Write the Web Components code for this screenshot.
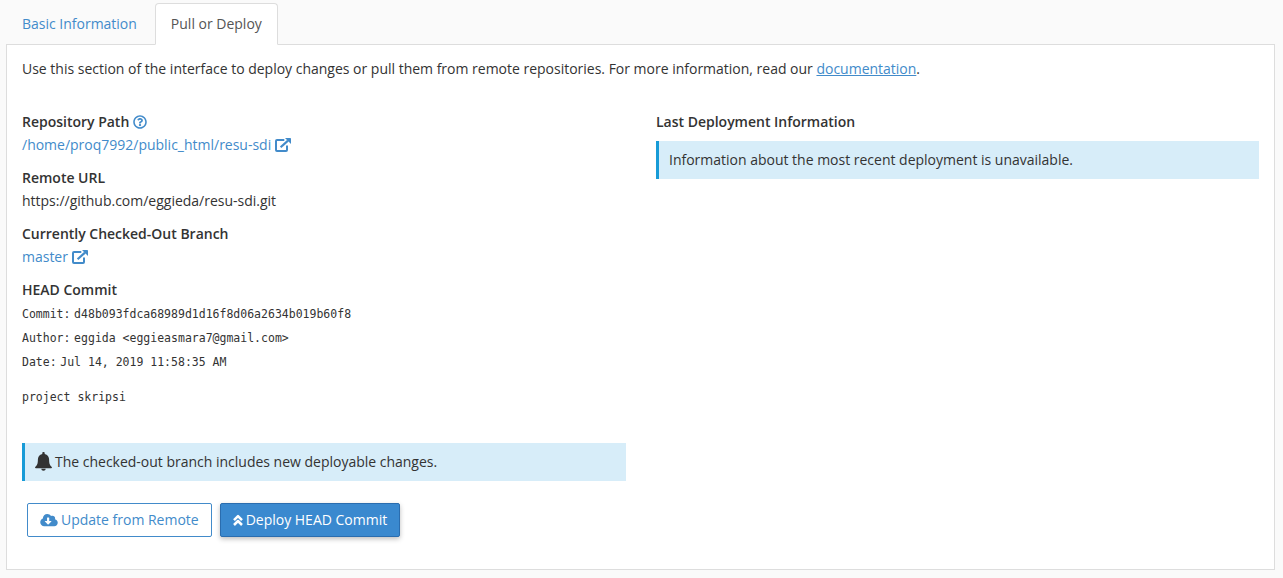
<!DOCTYPE html>
<html lang="en">
<head>
<meta charset="utf-8">
<title>Pull or Deploy</title>
<style>
html{background:#fafafa}
body{margin:0;padding:3px 8px 0 6px;font:14px/20px "Open Sans",sans-serif;letter-spacing:-.008px;color:#333}
</style>
</head>
<body>
<deploy-page></deploy-page>
<script>
const ICONS = {
  help: ['0 0 512 512', '<path d="M256 8C119 8 8 119 8 256s111 248 248 248 248-111 248-248S393 8 256 8zm0 438c-105 0-190-85-190-190 0-105 85-190 190-190 105 0 190 85 190 190 0 105-84 190-190 190zm107-245c0 67-73 68-73 93v6c0 7-5 12-12 12h-44c-7 0-12-5-12-12v-9c0-36 27-50 48-62 18-10 29-17 29-30 0-18-22-29-40-29-24 0-35 11-50 30-4 5-12 6-17 2l-27-20c-5-4-6-11-3-17 23-34 53-53 101-53 51 0 100 40 100 89zM298 368c0 23-19 42-42 42s-42-19-42-42 19-42 42-42 42 19 42 42z"/>'],
  external: ['0 0 16 14', '<path d="M9.3 2H2Q1 2 1 3v9q0 1 1 1h9q1 0 1-1V7.6" fill="none" stroke="currentColor" stroke-width="2"/><path d="M5.6 9.2L13 2.6" fill="none" stroke="currentColor" stroke-width="2.2"/><path d="M10 0h5.3q.7 0 .7.7V6z"/>'],
  bell: ['0 0 17 19', '<path d="M8.5 0c.8 0 1.2.5 1.2 1.2v.7c2.9.6 4.4 2.8 4.4 5.6 0 4.4.9 6 2.6 7.4.6.6.2 1.4-.6 1.4H.9c-.8 0-1.2-.8-.6-1.4C2 13.500 2.900 11.900 2.900 7.500c0-2.800 1.500-5 4.400-5.600v-.7C7.300.5 7.700 0 8.500 0z"/><path d="M6.300 16.800h4.400c0 1.200-1 2-2.200 2s-2.200-.8-2.200-2z"/>'],
  cloud: ['0 0 640 512', '<path d="M538 227c4-11 6-23 6-35 0-53-43-96-96-96-20 0-38 6-53 16-28-48-79-80-139-80-88 0-160 72-160 160v8C40 220 0 273 0 336c0 79 65 144 144 144h368c71 0 128-57 128-128 0-62-44-114-102-125zm-133 88L299 420c-6 6-16 6-22 0L171 315c-10-10-3-27 12-27h65V176c0-9 7-16 16-16h48c9 0 16 7 16 16v112h65c15 0 22 17 12 27z"/>'],
  up: ['0 0 10 12', '<path d="M1 6.1l4-4 4 4M1 11l4-4 4 4" fill="none" stroke="currentColor" stroke-width="2.5" stroke-linejoin="round"/>']
};

function define(name, css, html) {
  const template = document.createElement('template');
  template.innerHTML = `<style>${css}</style>${html}`;
  customElements.define(name, class extends HTMLElement {
    constructor() {
      super();
      this.attachShadow({mode: 'open'}).append(template.content.cloneNode(true));
    }
  });
}

customElements.define('ui-icon', class extends HTMLElement {
  constructor() {
    super();
    this.attachShadow({mode: 'open'});
  }
  connectedCallback() {
    const [box, shape] = ICONS[this.getAttribute('name')];
    this.shadowRoot.innerHTML = `<style>
      :host{display:inline-block;flex:none;width:14px;height:14px;vertical-align:-2px}
      svg{display:block;width:100%;height:100%;fill:currentColor}
    </style><svg viewBox="${box}" aria-hidden="true">${shape}</svg>`;
  }
});

define('ui-tab', `
  :host{display:block;box-sizing:border-box;height:42px;padding:10px 15px;margin-right:2px;border:1px solid transparent;color:#428bca;white-space:nowrap}
  :host([active]){background:#fff;border-color:#ddd;border-bottom-color:#fff;border-radius:4px 4px 0 0;color:#555}
`, '<slot></slot>');

define('ui-tabs', `
  :host{display:flex;margin-bottom:-1px;position:relative;z-index:1}
`, '<slot></slot>');

define('ui-panel', `
  :host{display:block;box-sizing:border-box;height:526px;padding:14px 15px 0;background:#fff;border:1px solid #ddd}
`, '<slot></slot>');

define('ui-link', `
  :host{color:#428bca}
  :host([underlined]){text-decoration:underline}
`, '<slot></slot>');

define('ui-field', `
  :host{display:block;margin-bottom:13px}
  .label{font-weight:600;margin-bottom:3px}
  .value{height:20px;white-space:nowrap}
`, '<div class="label"><slot name="label"></slot></div><div class="value"><slot></slot></div>');

define('ui-alert', `
  :host{display:flex;align-items:center;box-sizing:border-box;height:38px;padding-left:10px;border-left:3px solid #179bd7;background:#d7edf9}
`, '<slot></slot>');

define('commit-line', `
  :host{display:block;height:24px;line-height:24px;letter-spacing:0;white-space:nowrap}
  .mono{font-family:"DejaVu Sans Mono",monospace;font-size:11.5px}
`, '<span class="mono"><slot name="key"></slot></span> <span class="mono"><slot></slot></span>');

define('commit-message', `
  :host{display:block;height:24px;margin-top:12px;line-height:24px;letter-spacing:0;font-family:"DejaVu Sans Mono",monospace;font-size:11.5px}
`, '<slot></slot>');

define('ui-button', `
  :host{display:flex;align-items:center;box-sizing:border-box;height:34px;padding:0 12px;border:1px solid #428bca;border-radius:2px;background:#fff;color:#428bca;white-space:nowrap}
  :host([primary]){background:#3a89cf;border-color:#2a6daf;color:#fff;box-shadow:0 2px 5px rgba(0,0,0,.26)}
`, '<slot></slot>');

define('deploy-page', `
  :host{display:block}
  .cols{display:grid;grid-template-columns:604px 603px;column-gap:30px;margin-top:33px}
  .heading{font-weight:600}
  .commit-title{margin-bottom:1px}
  .pending{margin-top:34px;padding-left:10px}
  .latest{margin-top:9px}
  .actions{display:flex;gap:8px;padding:22px 0 0 5px}
  .external{width:16px;height:14px}
  .bell{width:17px;height:19px;margin:0 3px 2px 0}
  .cloud{width:18px;height:14px;margin-right:3px}
  .up{width:10px;height:12px;margin-right:3px}
`, `
  <ui-tabs><ui-tab>Basic Information</ui-tab><ui-tab active>Pull or Deploy</ui-tab></ui-tabs>
  <ui-panel>
    <div>Use this section of the interface to deploy changes or pull them from remote repositories. For more information, read our <ui-link underlined>documentation</ui-link>.</div>
    <div class="cols">
      <section>
        <ui-field><span slot="label">Repository Path <ui-link><ui-icon name="help"></ui-icon></ui-link></span><ui-link>/home/proq7992/public_html/resu-sdi <ui-icon class="external" name="external"></ui-icon></ui-link></ui-field>
        <ui-field><span slot="label">Remote URL</span>https://github.com/eggieda/resu-sdi.git</ui-field>
        <ui-field><span slot="label">Currently Checked-Out Branch</span><ui-link>master <ui-icon class="external" name="external"></ui-icon></ui-link></ui-field>
        <div class="heading commit-title">HEAD Commit</div>
        <commit-line><span slot="key">Commit:</span>d48b093fdca68989d1d16f8d06a2634b019b60f8</commit-line>
        <commit-line><span slot="key">Author:</span>eggida &lt;eggieasmara7@gmail.com&gt;</commit-line>
        <commit-line><span slot="key">Date:</span>Jul 14, 2019 11:58:35 AM</commit-line>
        <commit-message>project skripsi</commit-message>
        <ui-alert class="pending"><ui-icon class="bell" name="bell"></ui-icon><span>The checked-out branch includes new deployable changes.</span></ui-alert>
        <div class="actions">
          <ui-button><ui-icon class="cloud" name="cloud"></ui-icon><span>Update from Remote</span></ui-button>
          <ui-button primary><ui-icon class="up" name="up"></ui-icon><span>Deploy HEAD Commit</span></ui-button>
        </div>
      </section>
      <section>
        <div class="heading">Last Deployment Information</div>
        <ui-alert class="latest"><span>Information about the most recent deployment is unavailable.</span></ui-alert>
      </section>
    </div>
  </ui-panel>
`);
</script>
</body>
</html>
